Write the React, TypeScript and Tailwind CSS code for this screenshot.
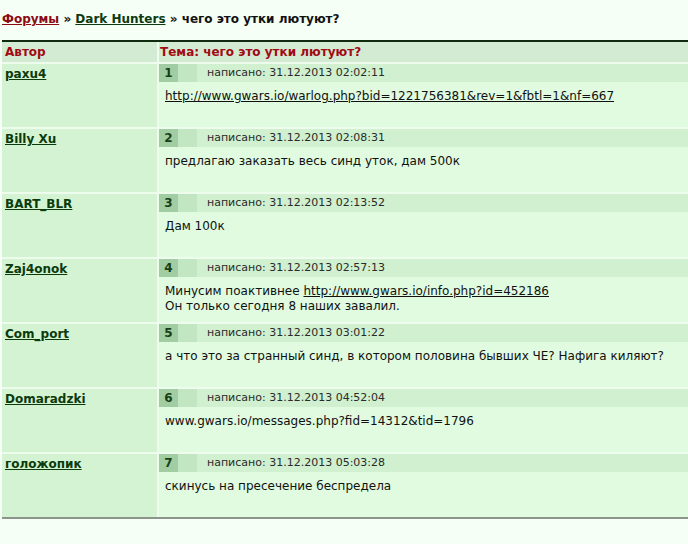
const posts = [
  { n: 1, author: 'paxu4', date: '31.12.2013 02:02:11', body: [[{ link: 'http://www.gwars.io/warlog.php?bid=1221756381&rev=1&fbtl=1&nf=667' }]] },
  { n: 2, author: 'Billy Xu', date: '31.12.2013 02:08:31', body: [['предлагаю заказать весь синд уток, дам 500к']] },
  { n: 3, author: 'BART_BLR', date: '31.12.2013 02:13:52', body: [['Дам 100к']] },
  {
    n: 4,
    author: 'Zaj4onok',
    date: '31.12.2013 02:57:13',
    body: [['Минусим поактивнее ', { link: 'http://www.gwars.io/info.php?id=452186' }], ['Он только сегодня 8 наших завалил.']],
  },
  { n: 5, author: 'Com_port', date: '31.12.2013 03:01:22', body: [['а что это за странный синд, в котором половина бывших ЧЕ? Нафига киляют?']] },
  { n: 6, author: 'Domaradzki', date: '31.12.2013 04:52:04', body: [['www.gwars.io/messages.php?fid=14312&tid=1796']] },
  { n: 7, author: 'голожопик', date: '31.12.2013 05:03:28', body: [['скинусь на пресечение беспредела']] },
] as { n: number; author: string; date: string; body: (string | { link: string })[][] }[];

export default function App() {
  return (
    <div className="min-h-[544px] bg-[#f5fff5] pl-[2px] font-['DejaVu_Sans',Verdana,sans-serif] text-[12px] text-[#111]">
      <div className="flex h-[40px] items-start pt-[10px] text-[12px] font-bold leading-[18px]">
        <a className="text-[#8b0a14] underline">Форумы</a>
        <span className="whitespace-pre"> » </span>
        <a className="text-[#0c3a10] underline">Dark Hunters</a>
        <span className="whitespace-pre"> » чего это утки лютуют?</span>
      </div>

      <div className="h-[2px] bg-[#0f2a0f]" />
      <div className="grid grid-cols-[155px_1fr] gap-x-[2px] gap-y-[2px] bg-[#eefcee]">
        <div className="flex h-[20px] items-center bg-[#d2ebd2] pl-[3px] font-bold text-[#a10a12]">Автор</div>
        <div className="flex h-[20px] items-center bg-[#d2ebd2] pl-[1px] font-bold text-[#a10a12]">
          Тема: чего это утки лютуют?
        </div>

        {posts.map((p) => (
          <Row key={p.n} post={p} />
        ))}
      </div>
      <div className="h-[2px] bg-[#8c948c]" />
    </div>
  );
}

function Row({ post }: { post: (typeof posts)[number] }) {
  return (
    <>
      <div className="h-[63px] bg-[#d3f3d3] pl-[3px] pt-[1px]">
        <a className="font-bold leading-[15px] text-[#0b3b0b] underline">{post.author}</a>
      </div>
      <div className="h-[63px] bg-[#e0fbe0]">
        <div className="flex h-[18px] items-center bg-[#d0f0d0]">
          <div className="flex h-full w-[19px] items-center justify-center bg-[#a2cda2] font-bold text-[#173f17]">
            {post.n}
          </div>
          <div className="h-full w-[19px] bg-[#c2e6c2]" />
          <div className="pl-[10px] text-[11px] text-[#2a2a2a]">написано: {post.date}</div>
        </div>
        <div className="px-[6px] pt-[7px] leading-[15px]">
          {post.body.map((line, i) => (
            <div key={i}>
              {line.map((part, j) =>
                typeof part === 'string' ? (
                  <span key={j}>{part}</span>
                ) : (
                  <a key={j} className="underline">
                    {part.link}
                  </a>
                )
              )}
            </div>
          ))}
        </div>
      </div>
    </>
  );
}
